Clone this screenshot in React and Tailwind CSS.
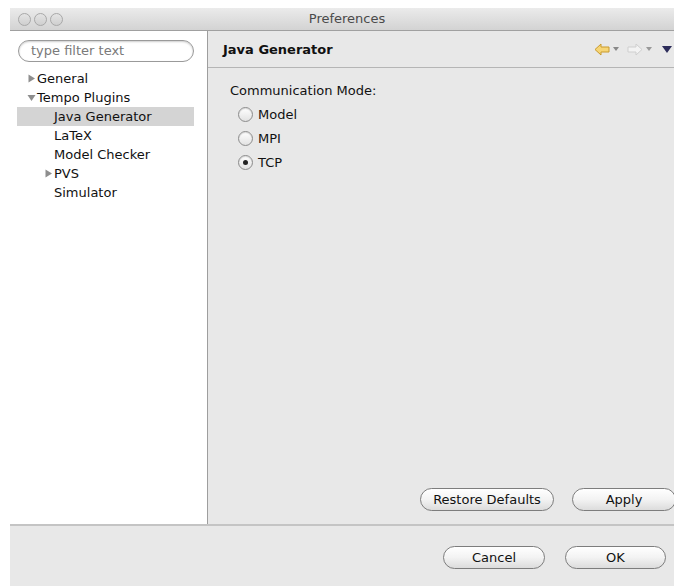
import React from "react";

const tree = [
  { label: "General", depth: 0, arrow: "right" },
  { label: "Tempo Plugins", depth: 0, arrow: "down" },
  { label: "Java Generator", depth: 1, selected: true },
  { label: "LaTeX", depth: 1 },
  { label: "Model Checker", depth: 1 },
  { label: "PVS", depth: 1, arrow: "right" },
  { label: "Simulator", depth: 1 },
];

const modes = [
  { label: "Model", checked: false },
  { label: "MPI", checked: false },
  { label: "TCP", checked: true },
];

function Light() {
  return (
    <span className="w-[13px] h-[13px] rounded-full border border-[#a8a8a8] bg-gradient-to-b from-[#e4e4e4] to-[#cfcfcf]" />
  );
}

function Twisty({ dir }) {
  return (
    <svg width="9" height="9" viewBox="0 0 9 9" className="mr-[1px]">
      {dir === "down" ? (
        <path d="M0.5 2 H8.5 L4.5 8 Z" fill="#8e8e8e" />
      ) : (
        <path d="M1.5 0.5 V8.5 L8 4.5 Z" fill="#8e8e8e" />
      )}
    </svg>
  );
}

function Radio({ checked }) {
  return (
    <span className="w-[15px] h-[15px] rounded-full border border-[#8c8c8c] bg-gradient-to-b from-[#ffffff] to-[#e2e2e2] shadow-[inset_0_1px_1px_rgba(0,0,0,0.15)] flex items-center justify-center">
      {checked && <span className="w-[5px] h-[5px] rounded-full bg-[#222]" />}
    </span>
  );
}

function AquaButton({ children, className = "" }) {
  return (
    <button
      className={`h-[23px] rounded-full border border-[#7d7d7d] bg-gradient-to-b from-[#ffffff] via-[#f3f3f3] to-[#dcdcdc] text-[13px] text-[#111] ${className}`}
    >
      {children}
    </button>
  );
}

export default function App() {
  return (
    <div
      className="w-[674px] h-[586px] bg-white pt-[8px] pl-[10px] overflow-hidden"
      style={{ fontFamily: '"DejaVu Sans", "Liberation Sans", sans-serif' }}
    >
      <div className="h-full flex flex-col bg-[#e8e8e8]">
        {/* title bar */}
        <div className="h-[23px] flex items-center relative bg-gradient-to-b from-[#ebebeb] to-[#d3d3d3] border-b border-[#a0a0a0]">
          <div className="flex gap-[3px] pl-[8px]">
            <Light />
            <Light />
            <Light />
          </div>
          <div className="absolute inset-0 flex items-center justify-center pl-[10px] text-[13px] text-[#4a4a4a]">
            Preferences
          </div>
        </div>

        <div className="flex-1 flex min-h-0">
          {/* tree side */}
          <div className="w-[198px] bg-white border-r border-[#9e9e9e] pt-[9px]">
            <div className="ml-[8px] w-[176px] h-[22px] rounded-full border border-[#9a9a9a] shadow-[inset_0_1px_2px_rgba(0,0,0,0.2)] flex items-center pl-[12px] text-[13px] text-[#7a7a7a]">
              type filter text
            </div>
            <div className="mt-[7px] flex flex-col">
              {tree.map((item) => (
                <div
                  key={item.label}
                  className={`h-[19px] ml-[7px] w-[177px] flex items-center text-[13px] text-[#111] ${
                    item.selected ? "bg-[#d4d4d4]" : ""
                  }`}
                >
                  <span className={item.depth ? "w-[37px] flex justify-end" : "w-[20px] flex justify-end"}>
                    {item.arrow ? <Twisty dir={item.arrow} /> : null}
                  </span>
                  <span>{item.label}</span>
                </div>
              ))}
            </div>
          </div>

          {/* page side */}
          <div className="flex-1 flex flex-col">
            <div className="h-[37px] flex items-center justify-between pl-[15px] pr-[2px] border-b border-[#b5b5b5]">
              <span className="text-[13px] font-bold text-[#111] pt-[2px]">Java Generator</span>
              <div className="flex items-center gap-[3px]">
                <svg width="16" height="13" viewBox="0 0 16 13">
                  <path d="M1 6.5 L7 1 V4 H15 V9 H7 V12 Z" fill="#f6d576" stroke="#c99a2c" strokeWidth="1" strokeLinejoin="round" />
                </svg>
                <svg width="6" height="4" viewBox="0 0 6 4"><path d="M0 0 H6 L3 4 Z" fill="#888" /></svg>
                <svg width="16" height="13" viewBox="0 0 16 13" className="ml-[5px]">
                  <path d="M15 6.5 L9 1 V4 H1 V9 H9 V12 Z" fill="#f3f3f3" stroke="#cfcfcf" strokeWidth="1" strokeLinejoin="round" />
                </svg>
                <svg width="6" height="4" viewBox="0 0 6 4"><path d="M0 0 H6 L3 4 Z" fill="#999" /></svg>
                <svg width="10" height="7" viewBox="0 0 10 7" className="ml-[7px]"><path d="M0 0 H10 L5 7 Z" fill="#2c2c5a" /></svg>
              </div>
            </div>

            <div className="flex-1 pl-[22px] pt-[13px]">
              <div className="text-[13px] text-[#111]">Communication Mode:</div>
              <div className="mt-[2px] pl-[8px] flex flex-col">
                {modes.map((m) => (
                  <label key={m.label} className="h-[24px] flex items-center gap-[5px] text-[13px] text-[#111]">
                    <Radio checked={m.checked} />
                    {m.label}
                  </label>
                ))}
              </div>
            </div>

            <div className="h-[36px] flex items-start justify-end gap-[18px]">
              <AquaButton className="w-[134px]">Restore Defaults</AquaButton>
              <AquaButton className="w-[104px] -mr-[2px]">Apply</AquaButton>
            </div>
          </div>
        </div>

        {/* dialog buttons */}
        <div className="h-[62px] border-t-2 border-[#c4c4c4] flex items-start justify-end gap-[20px] pt-[20px] pr-[8px]">
          <AquaButton className="w-[102px]">Cancel</AquaButton>
          <AquaButton className="w-[101px]">OK</AquaButton>
        </div>
      </div>
    </div>
  );
}
